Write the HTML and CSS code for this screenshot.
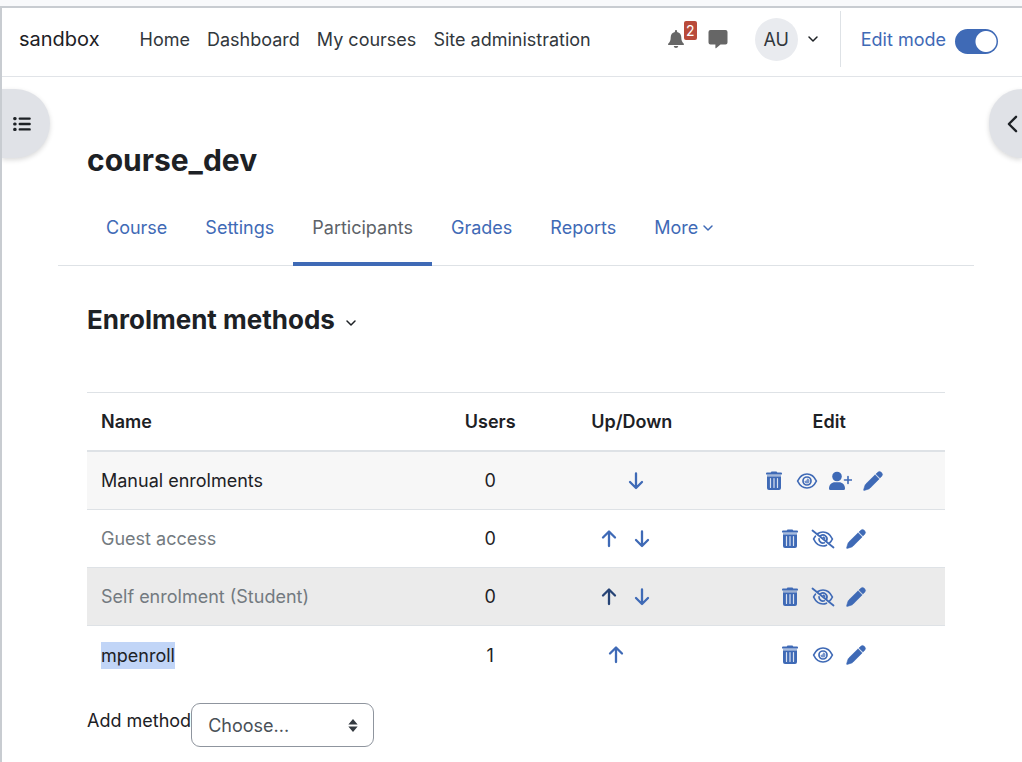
FILE: index.html
```html
<!DOCTYPE html>
<html lang="en">
<head>
    <meta charset="UTF-8">
    <meta name="viewport" content="width=device-width, initial-scale=1.0">
    <title>course_dev: Enrolment methods</title>
    <link rel="stylesheet" href="styles.css">
</head>
<body>

    <!-- Shared icons -->
    <svg class="sprite" aria-hidden="true">
        <symbol id="chevron" viewBox="0 0 12 12"><path d="M2 4l4 4 4-4" fill="none" stroke="currentColor" stroke-width="1.5" stroke-linecap="round" stroke-linejoin="round"/></symbol>
        <symbol id="up" viewBox="0 0 24 24"><path d="M12 19V5M6 10.500l6-6 6 6" fill="none" stroke="currentColor" stroke-width="2.300" stroke-linecap="round" stroke-linejoin="round"/></symbol>
        <symbol id="down" viewBox="0 0 24 24"><path d="M12 4.500v14M6 13l6 6 6-6" fill="none" stroke="currentColor" stroke-width="2.300" stroke-linecap="round" stroke-linejoin="round"/></symbol>
        <symbol id="trash" viewBox="0 0 24 24">
            <path d="M9.500 2.500h5l.8 1H19q1 0 1 1V5q0 .6-.8.6H4.800Q4 5.600 4 5v-.5q0-1 1-1h3.700z" fill="currentColor"/>
            <path d="M5 5.600h14v2H5z" fill="currentColor" opacity=".45"/>
            <path d="M5 7.500h14v11.500q0 2-2 2H7q-2 0-2-2z" fill="currentColor"/>
            <path d="M8.500 9.500v9M12 9.500v9M15.500 9.500v9" stroke="#fff" stroke-width="1.200" stroke-linecap="round" opacity=".8"/>
        </symbol>
        <symbol id="eye" viewBox="0 0 24 24">
            <path d="M2.600 12C4.500 8 8 5 12 5s7.500 3 9.400 7c-1.900 4-5.400 7-9.400 7s-7.500-3-9.400-7z" fill="none" stroke="currentColor" stroke-width="1.700" stroke-linejoin="round"/>
            <circle cx="12" cy="12" r="4" fill="none" stroke="currentColor" stroke-width="1.700"/>
            <path d="M12 9.500a2.500 2.500 0 1 1-2.500 2.500q2.500 0 2.500-2.500z" fill="currentColor" opacity=".7"/>
        </symbol>
        <symbol id="eye-slash" viewBox="0 0 24 24">
            <path d="M6.500 6.800C8 5.700 10 5 12 5c4 0 7.500 3 9.400 7-.7 1.500-1.600 2.800-2.800 3.900M15.500 18.200c-1.100.5-2.300.8-3.500.8-4 0-7.500-3-9.400-7 .5-1.100 1.100-2 1.800-2.800" fill="none" stroke="currentColor" stroke-width="1.700" stroke-linecap="round"/>
            <path d="M9.600 8.800a4 4 0 0 1 6.100 4.700M13.300 15.800A4 4 0 0 1 8 11.800" fill="none" stroke="currentColor" stroke-width="1.700" stroke-linecap="round"/>
            <path d="M12 9.500a2.500 2.500 0 0 1 2.300 3.300l-2.800-2.200q.5-.5.5-1.100z" fill="currentColor"/>
            <path d="M1.500 3.500l21 17" stroke="currentColor" stroke-width="1.800" stroke-linecap="round"/>
        </symbol>
        <symbol id="user-plus" viewBox="0 0 24 24">
            <circle cx="9" cy="7.500" r="4.800" fill="currentColor"/>
            <path d="M1 19.500c0-3.700 2.700-6.200 6-6.200h4c3.300 0 6 2.500 6 6.200q0 1.500-1.400 1.500H2.400Q1 21 1 19.500z" fill="currentColor"/>
            <path d="M20 7.500v7M16.500 11h7" stroke="currentColor" stroke-width="1.600" stroke-linecap="round"/>
        </symbol>
        <symbol id="pencil" viewBox="0 0 24 24">
            <path d="M16.800 3.200q1.700-1.600 3.500.1l.4.400q1.700 1.800.1 3.500l-1.900 1.900-4-4zM14.100 5.800l4.100 4.100-9 9.100q-.8.900-1.900 1.200l-4 1.200q-.9.200-.7-.7l1.200-4q.3-1.100 1.200-1.900z" fill="currentColor" stroke="currentColor" stroke-width=".5"/>
        </symbol>
    </svg>

    <div class="page">
        <header class="navbar">
            <a class="brand" href="#">sandbox</a>
            <nav class="main-nav">
                <a href="#">Home</a>
                <a href="#">Dashboard</a>
                <a href="#">My courses</a>
                <a href="#">Site administration</a>
            </nav>
            <div class="user-nav">
                <button class="nav-button" aria-label="Notifications">
                    <svg class="nav-icon" viewBox="0 0 20 20"><path d="M10 1q1.100 0 1.100 1.200v.7c2.700.5 4.200 2.600 4.200 5.300 0 3 .6 4.600 2.300 6.200.8.800.3 1.600-.6 1.600H3c-.9 0-1.400-.8-.6-1.600C4.100 12.800 4.700 11.200 4.700 8.200c0-2.700 1.500-4.800 4.200-5.300v-.7Q8.900 1 10 1zM7.700 17h4.600q-.3 2-2.300 2t-2.300-2z" fill="currentColor"/></svg>
                    <span class="badge">2</span>
                </button>
                <button class="nav-button" aria-label="Messages">
                    <svg class="nav-icon" viewBox="0 0 20 20"><path d="M2.500 1h15Q19.500 1 19.500 3v10.500q0 2-2 2H12.500L8 19.200q-.6.400-.6-.4v-3.300H2.500q-2 0-2-2V3q0-2 2-2z" fill="currentColor"/></svg>
                </button>
                <button class="user-menu" aria-label="User menu">
                    <span class="avatar">AU</span>
                    <svg class="caret"><use href="#chevron"/></svg>
                </button>
                <div class="edit-mode">
                    <label for="editMode">Edit mode</label>
                    <input type="checkbox" id="editMode" class="switch" checked>
                </div>
            </div>
        </header>

        <button class="drawer drawer-left" aria-label="Open course index">
            <svg class="drawer-icon" viewBox="0 0 20 20"><path d="M1.800 4h.6M1.800 10h.6M1.800 16h.6" stroke="currentColor" stroke-width="3.400" stroke-linecap="round"/><path d="M7.500 4h11M7.500 10h11M7.500 16h11" stroke="currentColor" stroke-width="2.600" stroke-linecap="round"/></svg>
        </button>
        <button class="drawer drawer-right" aria-label="Open block drawer">
            <svg class="drawer-icon" viewBox="0 0 20 20"><path d="M14.500 2l-8 8 8 8" fill="none" stroke="currentColor" stroke-width="2.600" stroke-linecap="round" stroke-linejoin="round"/></svg>
        </button>

        <main class="content">
            <h1>course_dev</h1>
            <nav class="tabs">
                <a href="#">Course</a>
                <a href="#">Settings</a>
                <a href="#" class="active">Participants</a>
                <a href="#">Grades</a>
                <a href="#">Reports</a>
                <a href="#">More <svg class="caret"><use href="#chevron"/></svg></a>
            </nav>

            <section class="methods">
                <div class="heading">
                    <h2>Enrolment methods</h2>
                    <button class="heading-toggle" aria-label="Participants navigation"><svg class="caret"><use href="#chevron"/></svg></button>
                </div>

                <table class="methods-table">
                    <thead>
                        <tr>
                            <th class="col-name">Name</th>
                            <th class="col-users">Users</th>
                            <th class="col-order">Up/Down</th>
                            <th class="col-edit">Edit</th>
                        </tr>
                    </thead>
                    <tbody>
                        <tr class="shaded">
                            <td>Manual enrolments</td>
                            <td>0</td>
                            <td><div class="actions"><span class="spacer"></span><a href="#" aria-label="Down"><svg><use href="#down"/></svg></a></div></td>
                            <td><div class="actions">
                                <a href="#" aria-label="Delete"><svg><use href="#trash"/></svg></a>
                                <a href="#" aria-label="Disable"><svg><use href="#eye"/></svg></a>
                                <a href="#" aria-label="Enrol users"><svg><use href="#user-plus"/></svg></a>
                                <a href="#" aria-label="Edit"><svg><use href="#pencil"/></svg></a>
                            </div></td>
                        </tr>
                        <tr>
                            <td class="dimmed">Guest access</td>
                            <td>0</td>
                            <td><div class="actions"><a href="#" aria-label="Up"><svg><use href="#up"/></svg></a><a href="#" aria-label="Down"><svg><use href="#down"/></svg></a></div></td>
                            <td><div class="actions">
                                <a href="#" aria-label="Delete"><svg><use href="#trash"/></svg></a>
                                <a href="#" aria-label="Enable"><svg><use href="#eye-slash"/></svg></a>
                                <a href="#" aria-label="Edit"><svg><use href="#pencil"/></svg></a>
                            </div></td>
                        </tr>
                        <tr class="hovered">
                            <td class="dimmed">Self enrolment (Student)</td>
                            <td>0</td>
                            <td><div class="actions"><a href="#" class="current" aria-label="Up"><svg><use href="#up"/></svg></a><a href="#" aria-label="Down"><svg><use href="#down"/></svg></a></div></td>
                            <td><div class="actions">
                                <a href="#" aria-label="Delete"><svg><use href="#trash"/></svg></a>
                                <a href="#" aria-label="Enable"><svg><use href="#eye-slash"/></svg></a>
                                <a href="#" aria-label="Edit"><svg><use href="#pencil"/></svg></a>
                            </div></td>
                        </tr>
                        <tr>
                            <td><span class="selected">mpenroll</span></td>
                            <td>1</td>
                            <td><div class="actions"><a href="#" aria-label="Up"><svg><use href="#up"/></svg></a><span class="spacer"></span></div></td>
                            <td><div class="actions">
                                <a href="#" aria-label="Delete"><svg><use href="#trash"/></svg></a>
                                <a href="#" aria-label="Disable"><svg><use href="#eye"/></svg></a>
                                <a href="#" aria-label="Edit"><svg><use href="#pencil"/></svg></a>
                            </div></td>
                        </tr>
                    </tbody>
                </table>

                <form class="add-method">
                    <label for="addMethod">Add method</label>
                    <div class="select-wrap">
                        <select id="addMethod">
                            <option>Choose...</option>
                        </select>
                        <svg class="sort" viewBox="0 0 10 14"><path d="M5 0l5 6H0zM5 14L0 8h10z" fill="currentColor"/></svg>
                    </div>
                </form>
            </section>
        </main>
    </div>

</body>
</html>
```
FILE: styles.css
```css
* {
    box-sizing: border-box;
}

body {
    margin: 0;
    padding-top: 6px;
    background-color: #f8f9fb;
    color: #1d2125;
    font-family: Inter, "Liberation Sans", sans-serif;
    font-size: 18px;
    line-height: 27px;
}

a {
    color: #3f6ab6;
    text-decoration: none;
}

button {
    padding: 0;
    border: none;
    background: none;
    color: inherit;
    font: inherit;
    cursor: pointer;
}

svg {
    display: block;
}

.sprite {
    position: absolute;
    width: 0;
    height: 0;
}

.page {
    position: relative;
    min-height: calc(100vh - 6px);
    border-top: 2px solid #c8ccd1;
    border-left: 2px solid #c8ccd1;
    background-color: #fff;
    overflow: hidden;
}

.caret {
    width: 12px;
    height: 12px;
}

/* Top bar */
.navbar {
    display: flex;
    align-items: center;
    height: 69px;
    padding: 0 24px 6px 17px;
    border-bottom: 1px solid #e1e4e8;
}

.brand {
    margin-right: 40px;
    color: #1d2125;
    font-size: 20px;
}

.main-nav {
    display: flex;
    gap: 17px;
}

.main-nav a {
    color: #32373c;
}

.user-nav {
    display: flex;
    align-items: center;
    margin-left: auto;
}

.nav-button {
    position: relative;
    margin-right: 22px;
    color: #666;
}

.nav-icon {
    width: 20px;
    height: 20px;
}

.badge {
    position: absolute;
    top: -8px;
    left: 18px;
    width: 13px;
    border-radius: 2px;
    background-color: #b94a3a;
    color: #fff;
    font-size: 14px;
    line-height: 19px;
}

.user-menu {
    display: flex;
    align-items: center;
    gap: 9px;
    margin-left: 5px;
    margin-right: 21px;
}

.avatar {
    width: 43px;
    height: 43px;
    border-radius: 50%;
    background-color: #e9ebef;
    color: #32373c;
    line-height: 43px;
}

.edit-mode {
    display: flex;
    align-items: center;
    gap: 9px;
    height: 56px;
    padding-left: 20px;
    border-left: 1px solid #dee2e6;
    color: #3f6ab6;
}

.switch {
    appearance: none;
    width: 43px;
    height: 25px;
    margin: 4px 0 0;
    border-radius: 13px;
    background: radial-gradient(circle at 31px 50%, #fff 10px, #3f6ab6 11px);
    cursor: pointer;
}

/* Drawer toggles at the page edges */
.drawer {
    position: absolute;
    top: 81px;
    height: 69px;
    background-color: #e0e2e7;
    box-shadow: 0 2px 5px rgba(0, 0, 0, 0.15);
}

.drawer-left {
    left: 0;
    width: 48px;
    padding-left: 11px;
    border-radius: 0 35px 35px 0;
}

.drawer-right {
    right: 0;
    width: 33px;
    padding-left: 14px;
    border-radius: 35px 0 0 35px;
}

.drawer-icon {
    width: 18px;
    height: 18px;
}

/* Course header */
.content {
    padding: 63px 48px 0 56px;
}

h1,
h2 {
    margin: 0;
    font-weight: 700;
}

h1 {
    padding-left: 29px;
    font-size: 30px;
    line-height: 40px;
}

.tabs {
    display: flex;
    margin-top: 9px;
    padding-left: 29px;
    border-bottom: 1px solid #dee2e6;
}

.tabs a {
    display: flex;
    align-items: center;
    gap: 4px;
    height: 77px;
    margin-bottom: -1px;
    padding: 4px 19px 0;
    border-bottom: 4px solid transparent;
}

.tabs .active {
    border-bottom-color: #3f6ab6;
    color: #5d6268;
}

/* Enrolment methods */
.methods {
    padding: 36px 29px 0;
}

.heading {
    display: flex;
    align-items: center;
    gap: 10px;
}

h2 {
    font-size: 26px;
    line-height: 36px;
}

.heading-toggle {
    padding-top: 6px;
}

.methods-table {
    width: 100%;
    margin-top: 54px;
    border-collapse: separate;
    border-spacing: 0;
    table-layout: fixed;
}

th,
td {
    height: 58px;
    padding: 0 14px;
    border-bottom: 1px solid #dee2e6;
    text-align: center;
}

th {
    height: 60px;
    border-top: 1px solid #dee2e6;
    border-bottom-width: 2px;
    font-weight: 600;
}

th:first-child,
td:first-child {
    text-align: left;
}

tbody tr:last-child td {
    border-bottom: none;
}

.col-name {
    width: 40%;
}

.col-users {
    width: 14%;
}

.col-order {
    width: 19%;
}

.shaded {
    background-color: #f7f7f7;
}

.hovered {
    background-color: #ebebeb;
}

.dimmed {
    color: #737a80;
}

.selected {
    padding: 3px 0;
    background-color: #c1d5f7;
}

.actions {
    display: flex;
    justify-content: center;
    padding-right: 3px;
}

.actions a {
    margin-right: 9px;
}

.actions .current {
    color: #264375;
}

.actions svg {
    width: 24px;
    height: 24px;
}

.spacer {
    width: 20px;
}

/* Add method form */
.add-method {
    display: flex;
    align-items: flex-start;
    margin-top: 19px;
    padding-bottom: 15px;
}

.add-method label {
    padding-top: 4px;
}

.select-wrap {
    position: relative;
}

select {
    appearance: none;
    width: 183px;
    height: 44px;
    padding: 1px 16px 0;
    border: 1px solid #8f959e;
    border-radius: 9px;
    background-color: #fff;
    color: #495057;
    font: inherit;
}

.sort {
    position: absolute;
    top: 16px;
    right: 16px;
    width: 10px;
    height: 13px;
    color: #343a40;
    pointer-events: none;
}
```
